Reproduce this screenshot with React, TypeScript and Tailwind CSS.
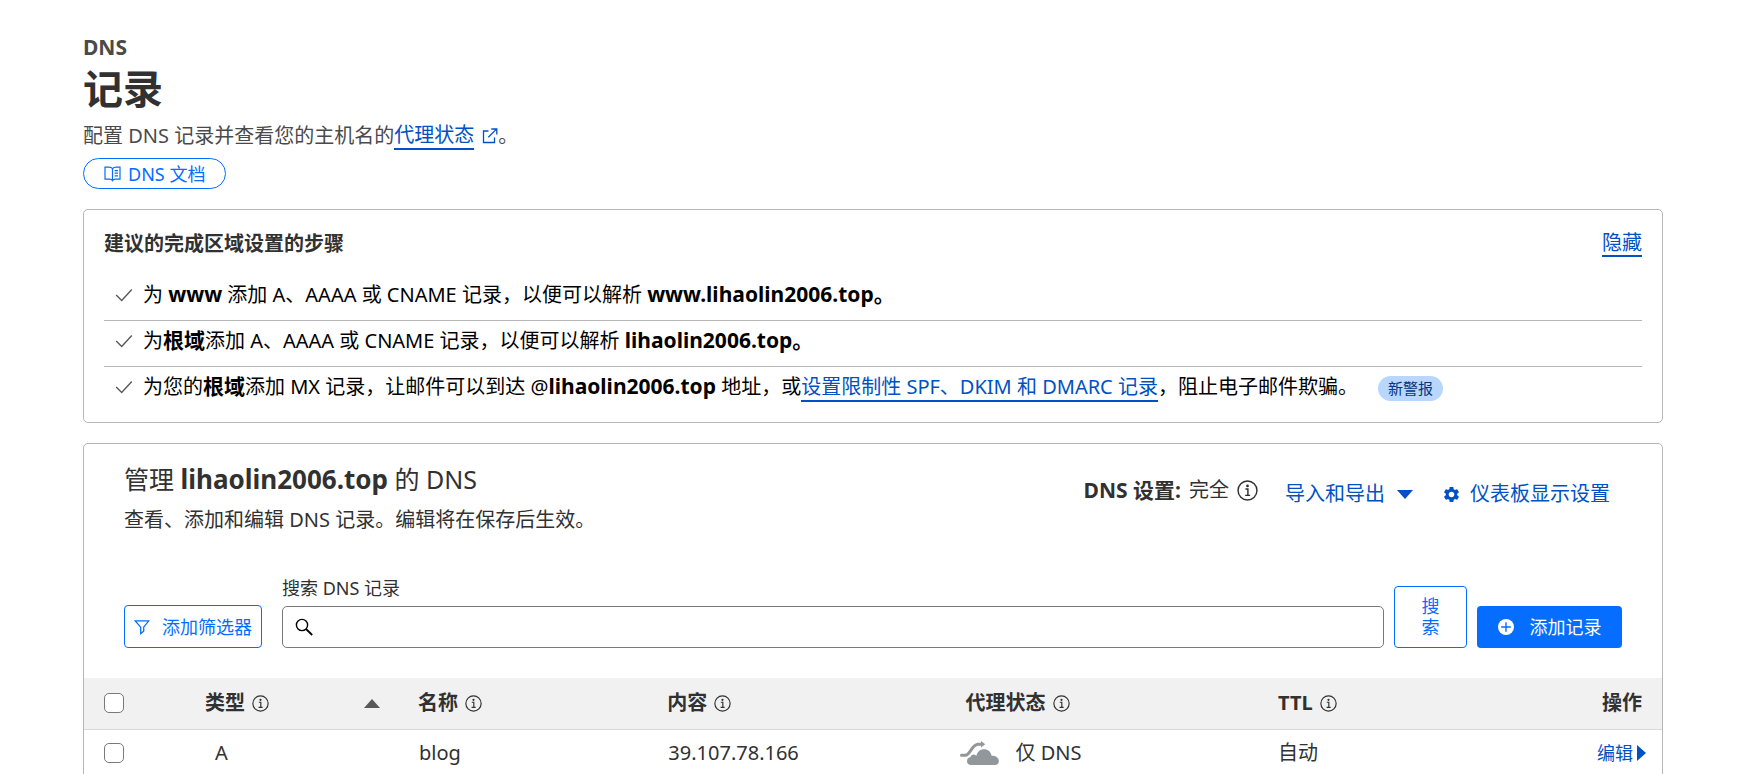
import type { ReactNode } from 'react'
import { MdSettings } from 'react-icons/md'

interface DnsRecord {
  type: string
  name: string
  content: string
  ttl: string
}

const records: DnsRecord[] = [
  { type: 'A', name: 'blog', content: '39.107.78.166', ttl: '自动' },
]

function InfoIcon({ large = false }: { large?: boolean }) {
  return (
    <svg
      viewBox="0 0 16 16"
      className={large ? 'h-[21px] w-[21px] shrink-0' : 'h-[17px] w-[17px] shrink-0'}
      fill="none"
      stroke="currentColor"
      strokeWidth="1.1"
      aria-hidden="true"
    >
      <circle cx="8" cy="8" r="7.2" />
      <path d="M6.4 6.8H8.3V11.6M6.2 11.7H10" />
      <circle cx="8" cy="4.5" r="0.5" fill="currentColor" />
    </svg>
  )
}

function ExternalIcon() {
  return (
    <svg viewBox="0 0 16 16" className="h-4 w-4" fill="none" stroke="currentColor" strokeWidth="1.3" aria-hidden="true">
      <path d="M6.5 3H1.5V14.5H12.5V9.5" />
      <path d="M6.3 9.3L14.2 1.4M9.3 1H14.8V6.5" />
    </svg>
  )
}

function BookIcon() {
  return (
    <svg viewBox="0 0 17 16" className="h-4 w-[17px]" fill="none" stroke="currentColor" strokeWidth="1.2" aria-hidden="true">
      <path d="M8.5 2.6C7.6 1.6 6.4 1.2 5 1.2H1V13.2H5.6C6.9 13.2 7.9 13.7 8.5 14.6C9.1 13.7 10.1 13.2 11.4 13.2H16V1.2H12C10.6 1.2 9.4 1.6 8.5 2.6V14.6" />
      <path d="M10.6 4.6H14M10.6 7.2H14M10.6 9.8H14" />
    </svg>
  )
}

function CheckIcon() {
  return (
    <svg viewBox="0 0 18 14" className="h-[14px] w-[18px] shrink-0 text-[#595959]" fill="none" stroke="currentColor" strokeWidth="1.4" aria-hidden="true">
      <path d="M1.2 7L6.7 12.4L16.8 1.6" />
    </svg>
  )
}

function FunnelIcon() {
  return (
    <svg viewBox="0 0 16 16" className="h-4 w-4" fill="none" stroke="currentColor" strokeWidth="1.3" aria-hidden="true">
      <path d="M1.2 1.8H14.8L9.7 8.2V12.2L6.7 14.6V8.2Z" />
    </svg>
  )
}

function SearchIcon() {
  return (
    <svg viewBox="0 0 18 18" className="h-[18px] w-[18px] text-black" fill="none" stroke="currentColor" strokeWidth="1.4" aria-hidden="true">
      <circle cx="7" cy="7" r="5.6" />
      <path d="M11 11L17.2 17" strokeWidth="1.8" />
    </svg>
  )
}

function PlusIcon() {
  return (
    <svg viewBox="0 0 16 16" className="h-4 w-4" aria-hidden="true">
      <circle cx="8" cy="8" r="8" fill="#fff" />
      <path d="M8 3.2V12.8M3.2 8H12.8" stroke="#056dff" strokeWidth="1.4" />
    </svg>
  )
}

function CloudIcon() {
  return (
    <svg viewBox="0 0 39 24" className="h-6 w-[39px] shrink-0" fill="#92979b" aria-hidden="true">
      <path d="M11 24C8.6 24 7 22.3 7 20.2C7 17.8 8.6 16.2 10.6 16C11 14.2 12.6 13.3 14.5 13.7C15.4 14 16 14.3 16.5 14.7C17.2 10.8 20.2 8.3 24 8.3C28 8.3 31 11 31.6 14.8C35.7 14.7 38.8 16.7 38.8 20C38.8 22.4 37.3 24 35 24Z" />
      <path d="M1.5 14.3H5.3C10.5 13.8 11.2 4.2 17.8 3.2H22" fill="none" stroke="#92979b" strokeWidth="3" strokeLinecap="round" />
      <path d="M21 0L25.2 3.2L21 6.6Z" />
    </svg>
  )
}

function Step({ children }: { children: ReactNode }) {
  return (
    <li className="flex items-center gap-[10px] border-b border-[#b6b6b6] pt-[5px] pb-[10px] pl-[11px] leading-[30px] text-black last:border-b-0">
      <CheckIcon />
      <p className="[&_b]:text-[21px] [&_b]:leading-none">{children}</p>
    </li>
  )
}

function HeaderCell({ label, className = '' }: { label: string; className?: string }) {
  return (
    <th scope="col" className={`pl-5 text-left font-bold ${className}`}>
      <span className="flex items-center gap-[7px]">
        {label}
        <InfoIcon />
      </span>
    </th>
  )
}

const checkboxClass =
  'block h-5 w-5 appearance-none rounded-[5px] border border-[#797979] bg-white checked:bg-[#056dff]'

export default function App() {
  return (
    <div className="h-screen overflow-hidden bg-white pt-[35px] pr-[91px] pl-[83px] font-['Noto_Sans','Noto_Sans_CJK_SC',sans-serif] text-[20px] leading-7 text-[#313131]">
      <header>
        <p className="text-[21px] leading-6 font-bold text-[#4a4a4a]">DNS</p>
        <h1 className="text-[40px] leading-[60px] font-bold">记录</h1>
        <p className="flex items-center pt-[3px] text-[#4a4a4a]">
          配置 DNS 记录并查看您的主机名的
          <a href="#proxy" className="flex items-center gap-2 text-[#0051c3]">
            <span className="border-b-2 border-[#0051c3] leading-[26px]">代理状态</span>
            <ExternalIcon />
          </a>
          。
        </p>
        <a
          href="#docs"
          className="mt-2 inline-flex h-[31px] items-center gap-[7px] rounded-full border border-[#056dff] px-5 text-[18px] text-[#056dff]"
        >
          <BookIcon />
          DNS 文档
        </a>
      </header>

      <section className="mt-5 rounded-[5px] border border-[#b6b6b6] px-5 pt-[21px] pb-[10px]">
        <div className="mb-[18px] flex items-center justify-between">
          <h2 className="leading-[26px] font-bold">建议的完成区域设置的步骤</h2>
          <a href="#hide" className="border-b-2 border-[#0051c3] leading-6 text-[#0051c3]">隐藏</a>
        </div>
        <ul>
          <Step>
            为 <b>www</b> 添加 A、AAAA 或 CNAME 记录，以便可以解析 <b>www.lihaolin2006.top。</b>
          </Step>
          <Step>
            为<b>根域</b>添加 A、AAAA 或 CNAME 记录，以便可以解析 <b>lihaolin2006.top。</b>
          </Step>
          <Step>
            为您的<b>根域</b>添加 MX 记录，让邮件可以到达 @<b>lihaolin2006.top</b> 地址，或
            <a href="#spf" className="border-b-2 border-[#0051c3] text-[#0051c3]">设置限制性 SPF、DKIM 和 DMARC 记录</a>
            ，阻止电子邮件欺骗。
            <span className="ml-5 inline-block rounded-full bg-[#b9d6ff] px-[10px] align-middle text-[15px] leading-[25px] text-[#003682]">
              新警报
            </span>
          </Step>
        </ul>
      </section>

      <section className="mt-5 rounded-[5px] border border-[#b6b6b6]">
        <div className="flex items-start justify-between px-10 pt-[17px]">
          <div>
            <h2 className="text-[25px] leading-9">
              管理 <b className="text-[26px] leading-none">lihaolin2006.top</b> 的 DNS
            </h2>
            <p className="mt-[9px]">查看、添加和编辑 DNS 记录。编辑将在保存后生效。</p>
          </div>
          <div className="flex items-start pt-[15px] pr-3">
            <p className="mr-[27px] flex items-center gap-2">
              <b className="text-[21px]">DNS 设置:</b> 完全
              <InfoIcon large />
            </p>
            <button type="button" className="mt-1 mr-[29px] flex items-center gap-3 text-[#0051c3]">
              导入和导出
              <svg viewBox="0 0 16 9" className="h-[9px] w-4" fill="currentColor" aria-hidden="true">
                <path d="M0 0H16L8 9Z" />
              </svg>
            </button>
            <button type="button" className="mt-1 flex items-center gap-[9px] text-[#0051c3]">
              <MdSettings className="h-[19px] w-[19px]" />
              仪表板显示设置
            </button>
          </div>
        </div>

        <form className="mt-[41px] mb-[30px] flex items-end px-10" onSubmit={(e) => e.preventDefault()}>
          <button
            type="button"
            className="mr-5 flex h-[43px] w-[138px] items-center justify-center gap-3 rounded-[4px] border border-[#056dff] text-[18px] whitespace-nowrap text-[#056dff]"
          >
            <FunnelIcon />
            添加筛选器
          </button>
          <div className="min-w-0 flex-1">
            <label htmlFor="search" className="mb-[5px] block text-[18px] leading-[26px]">搜索 DNS 记录</label>
            <div className="flex h-[42px] items-center gap-2 rounded-[5px] border border-[#797979] px-3">
              <SearchIcon />
              <input id="search" type="text" className="min-w-0 flex-1 outline-none" />
            </div>
          </div>
          <button
            type="submit"
            className="ml-[10px] h-[62px] w-[73px] rounded-[4px] border border-[#056dff] px-[26px] text-[18px] leading-[21px] text-[#056dff]"
          >
            搜索
          </button>
          <button
            type="button"
            className="ml-[10px] flex h-[42px] w-[145px] items-center justify-center gap-4 rounded-[4px] bg-[#056dff] text-[18px] whitespace-nowrap text-white"
          >
            <PlusIcon />
            添加记录
          </button>
        </form>

        <table className="w-full table-fixed">
          <thead>
            <tr className="h-[51px] border-b border-[#d9d9d9] bg-[#f1f1f1]">
              <th scope="col" className="w-[101px] pl-5">
                <input type="checkbox" aria-label="全选" className={checkboxClass} />
              </th>
              <th scope="col" className="w-[13.5%] pr-[18px] pl-5 text-left font-bold" aria-sort="ascending">
                <span className="flex items-center gap-[7px]">
                  类型
                  <InfoIcon />
                  <svg viewBox="0 0 16 9" className="ml-auto h-[9px] w-4 text-[#595959]" fill="currentColor" aria-hidden="true">
                    <path d="M0 9H16L8 0Z" />
                  </svg>
                </span>
              </th>
              <HeaderCell label="名称" className="w-[15.8%]" />
              <HeaderCell label="内容" className="w-[18.9%]" />
              <HeaderCell label="代理状态" className="w-[19.8%]" />
              <HeaderCell label="TTL" />
              <th scope="col" className="w-[100px] pr-5 text-right font-bold">操作</th>
            </tr>
          </thead>
          <tbody>
            {records.map((record) => (
              <tr key={record.name} className="h-[48px] border-b border-[#d9d9d9]">
                <td className="pl-5">
                  <input type="checkbox" aria-label={record.name} className={checkboxClass} />
                </td>
                <td className="pl-[30px]">{record.type}</td>
                <td className="pl-[21px]">{record.name}</td>
                <td className="pl-[21px]">{record.content}</td>
                <td className="pl-[14px]">
                  <span className="flex items-center gap-[17px]">
                    <CloudIcon />
                    仅 DNS
                  </span>
                </td>
                <td className="pl-5">{record.ttl}</td>
                <td className="pr-4">
                  <a href="#edit" className="flex items-center justify-end gap-1 text-[18px] text-[#0051c3]">
                    编辑
                    <svg viewBox="0 0 9 16" className="h-4 w-[9px]" fill="currentColor" aria-hidden="true">
                      <path d="M0 0L9 8L0 16Z" />
                    </svg>
                  </a>
                </td>
              </tr>
            ))}
            {/* spacer keeps the list open below the last record */}
            <tr className="h-[48px]" aria-hidden="true">
              <td colSpan={7} />
            </tr>
          </tbody>
        </table>
      </section>
    </div>
  )
}
